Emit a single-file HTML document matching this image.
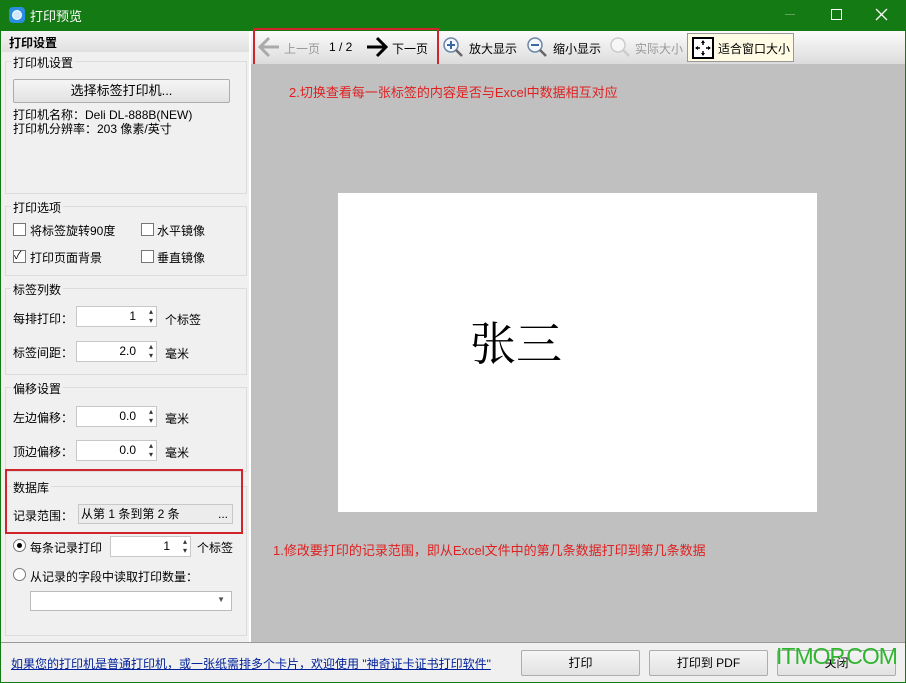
<!DOCTYPE html>
<html><head><meta charset="utf-8"><style>
*{margin:0;padding:0;box-sizing:border-box}
body{width:906px;height:683px;position:relative;overflow:hidden;background:#137a14;font-family:"Liberation Sans","Noto Sans CJK SC",sans-serif;font-size:12px;color:#000}
.a{position:absolute}
.grp{position:absolute;border:1px solid #dcdcdc;}
.lg{position:absolute;background:#f0f0f0;padding:0 2px;font-size:12px}
.spin{position:absolute;background:#fff;border:1px solid #c8c8c8;height:21px;text-align:right;padding-right:20px;line-height:19px}
.spin:after{content:"▴\A▾";white-space:pre;position:absolute;right:3px;top:0;font-size:8px;line-height:9px;color:#333}
.cb{position:absolute;width:13px;height:13px;border:1px solid #777;background:#fff}
.btn{position:absolute;border:1px solid #adadad;background:linear-gradient(#f5f5f5,#e2e2e2);text-align:center;border-radius:2px}
</style></head><body>
<div class="a" style="left:9px;top:7px;width:16px;height:16px;border-radius:4px;background:#2a8ee0"><div class="a" style="left:3px;top:3px;width:10px;height:10px;border-radius:50%;background:#cfe8ff;border:1px solid #fff"></div></div>
<div class="a" style="left:30px;top:6px;color:#fff;font-size:13px">打印预览</div>
<div class="a" style="left:785px;top:14px;width:10px;height:1px;background:#5fa35f"></div>
<div class="a" style="left:831px;top:9px;width:11px;height:11px;border:1px solid #fff"></div>
<svg class="a" style="left:875px;top:8px" width="13" height="13"><path d="M1 1L12 12M12 1L1 12" stroke="#fff" stroke-width="1.3"/></svg>

<div class="a" style="left:1px;top:31px;width:904px;height:651px;background:#f0f0f0"></div>
<div class="a" style="left:2px;top:31px;width:248px;height:21px;background:linear-gradient(#f4f4f4,#e0e0e0);font-weight:bold;padding:3px 0 0 7px">打印设置</div>
<div class="a" style="left:249px;top:31px;width:2px;height:611px;background:#fff"></div>
<div class="grp" style="left:5px;top:61px;width:242px;height:133px"></div><div class="lg" style="left:11px;top:54px">打印机设置</div>
<div class="btn" style="left:13px;top:79px;width:217px;height:24px;line-height:22px;font-size:13px">选择标签打印机...</div>
<div class="a" style="left:13px;top:108px;line-height:14px">打印机名称：Deli DL-888B(NEW)<br>打印机分辨率：203 像素/英寸</div>
<div class="grp" style="left:5px;top:206px;width:242px;height:70px"></div><div class="lg" style="left:11px;top:199px">打印选项</div>
<div class="cb" style="left:13px;top:223px"></div><div class="a" style="left:30px;top:222px">将标签旋转90度</div>
<div class="cb" style="left:141px;top:223px"></div><div class="a" style="left:157px;top:222px">水平镜像</div>
<div class="cb" style="left:13px;top:250px;font-size:11px;line-height:11px">✓</div><div class="a" style="left:30px;top:249px">打印页面背景</div>
<div class="cb" style="left:141px;top:250px"></div><div class="a" style="left:157px;top:249px">垂直镜像</div>
<div class="grp" style="left:5px;top:288px;width:242px;height:87px"></div><div class="lg" style="left:11px;top:281px">标签列数</div>
<div class="a" style="left:13px;top:310px">每排打印：</div><div class="spin" style="left:76px;top:306px;width:81px">1</div><div class="a" style="left:165px;top:311px">个标签</div>
<div class="a" style="left:13px;top:344px">标签间距：</div><div class="spin" style="left:76px;top:341px;width:81px">2.0</div><div class="a" style="left:165px;top:345px">毫米</div>
<div class="grp" style="left:5px;top:387px;width:242px;height:85px"></div><div class="lg" style="left:11px;top:380px">偏移设置</div>
<div class="a" style="left:13px;top:409px">左边偏移：</div><div class="spin" style="left:76px;top:406px;width:81px">0.0</div><div class="a" style="left:165px;top:410px">毫米</div>
<div class="a" style="left:13px;top:443px">顶边偏移：</div><div class="spin" style="left:76px;top:440px;width:81px">0.0</div><div class="a" style="left:165px;top:444px">毫米</div>
<div class="grp" style="left:5px;top:486px;width:242px;height:150px"></div><div class="lg" style="left:11px;top:479px">数据库</div>
<div class="a" style="left:13px;top:507px">记录范围：</div>
<div class="a" style="left:78px;top:504px;width:155px;height:20px;border:1px solid #c8c8c8;background:#ececec;padding:2px 2px;line-height:14px">从第 1 条到第 2 条<span style="position:absolute;right:4px">...</span></div>
<div class="a" style="left:5px;top:469px;width:238px;height:65px;border:2px solid #d0262b"></div>
<div class="a" style="left:13px;top:539px;width:13px;height:13px;border:1px solid #777;border-radius:50%;background:#fff"><div class="a" style="left:3px;top:3px;width:5px;height:5px;border-radius:50%;background:#000"></div></div>
<div class="a" style="left:30px;top:539px">每条记录打印</div><div class="spin" style="left:110px;top:536px;width:81px">1</div><div class="a" style="left:197px;top:539px">个标签</div>
<div class="a" style="left:13px;top:568px;width:13px;height:13px;border:1px solid #777;border-radius:50%;background:#fff"></div>
<div class="a" style="left:30px;top:568px">从记录的字段中读取打印数量：</div>
<div class="a" style="left:30px;top:591px;width:202px;height:20px;border:1px solid #bbb;background:#fff"><span style="position:absolute;right:6px;top:3px;font-size:8px;color:#555">▼</span></div>
<!-- toolbar -->
<div class="a" style="left:251px;top:31px;width:654px;height:33px;background:linear-gradient(#fbfbfb,#dcdcdc)"></div>
<svg class="a" style="left:257px;top:36px" width="24" height="22"><path d="M22 11H4M12 2L3 11L12 20" stroke="#aaa" stroke-width="3" fill="none"/></svg>
<div class="a" style="left:284px;top:40px;color:#999">上一页</div>
<div class="a" style="left:329px;top:40px">1 / 2</div>
<svg class="a" style="left:365px;top:36px" width="24" height="22"><path d="M2 11H20M12 2L21 11L12 20" stroke="#000" stroke-width="3" fill="none"/></svg>
<div class="a" style="left:392px;top:40px">下一页</div>
<div class="a" style="left:253px;top:28px;width:186px;height:39px;border:2px solid #d0262b"></div>
<svg class="a" style="left:442px;top:36px" width="24" height="24"><circle cx="9" cy="9" r="7" fill="#f4f8fc" stroke="#6b86a8" stroke-width="1.5"/><path d="M14 14L20 20" stroke="#666" stroke-width="2.5"/><path d="M5 9H13M9 5V13" stroke="#3a6aa0" stroke-width="2"/></svg>
<div class="a" style="left:469px;top:40px">放大显示</div>
<svg class="a" style="left:526px;top:36px" width="24" height="24"><circle cx="9" cy="9" r="7" fill="#f4f8fc" stroke="#6b86a8" stroke-width="1.5"/><path d="M14 14L20 20" stroke="#666" stroke-width="2.5"/><path d="M5 9H13" stroke="#3a6aa0" stroke-width="2"/></svg>
<div class="a" style="left:553px;top:40px">缩小显示</div>
<svg class="a" style="left:609px;top:36px" width="24" height="24"><circle cx="9" cy="9" r="7" fill="#f6f6f6" stroke="#ccc" stroke-width="1.5"/><path d="M14 14L20 20" stroke="#ccc" stroke-width="2.5"/></svg>
<div class="a" style="left:635px;top:40px;color:#999">实际大小</div>
<div class="a" style="left:687px;top:33px;width:107px;height:29px;border:1px solid #999;background:#fffbe5"></div>
<svg class="a" style="left:692px;top:37px" width="22" height="22"><rect x="1" y="1" width="20" height="20" fill="#fff" stroke="#000" stroke-width="2"/><path d="M11 4V8M11 14V18M4 11H8M14 11H18" stroke="#000" stroke-width="1.5"/><path d="M9 6L11 3L13 6ZM9 16L11 19L13 16ZM6 9L3 11L6 13ZM16 9L19 11L16 13Z" fill="#000"/></svg>
<div class="a" style="left:718px;top:40px">适合窗口大小</div>
<!-- preview -->
<div class="a" style="left:251px;top:64px;width:654px;height:578px;background:#c0c0c0"></div>
<div class="a" style="left:289px;top:82px;color:#e02020;font-size:13px">2.切换查看每一张标签的内容是否与Excel中数据相互对应</div>
<div class="a" style="left:338px;top:193px;width:479px;height:319px;background:#fff"></div>
<div class="a" style="left:470px;top:313px;font-size:46px;font-family:'Noto Serif CJK SC',serif;line-height:56px">张三</div>
<div class="a" style="left:273px;top:540px;color:#e02020;font-size:13px">1.修改要打印的记录范围，即从Excel文件中的第几条数据打印到第几条数据</div>
<!-- bottom -->
<div class="a" style="left:1px;top:642px;width:904px;height:1px;background:#999"></div>
<div class="a" style="left:11px;top:655px;color:#00209a;text-decoration:underline">如果您的打印机是普通打印机，或一张纸需排多个卡片，欢迎使用 "神奇证卡证书打印软件"</div>
<div class="btn" style="left:521px;top:650px;width:119px;height:26px;line-height:24px">打印</div>
<div class="btn" style="left:649px;top:650px;width:119px;height:26px;line-height:24px">打印到 PDF</div>
<div class="btn" style="left:777px;top:650px;width:119px;height:26px;line-height:24px">关闭</div>
<div class="a" style="left:776px;top:643px;color:#2fb52f;font-size:23px;letter-spacing:-1px;line-height:26px">ITMOP.COM</div>
</body></html>
